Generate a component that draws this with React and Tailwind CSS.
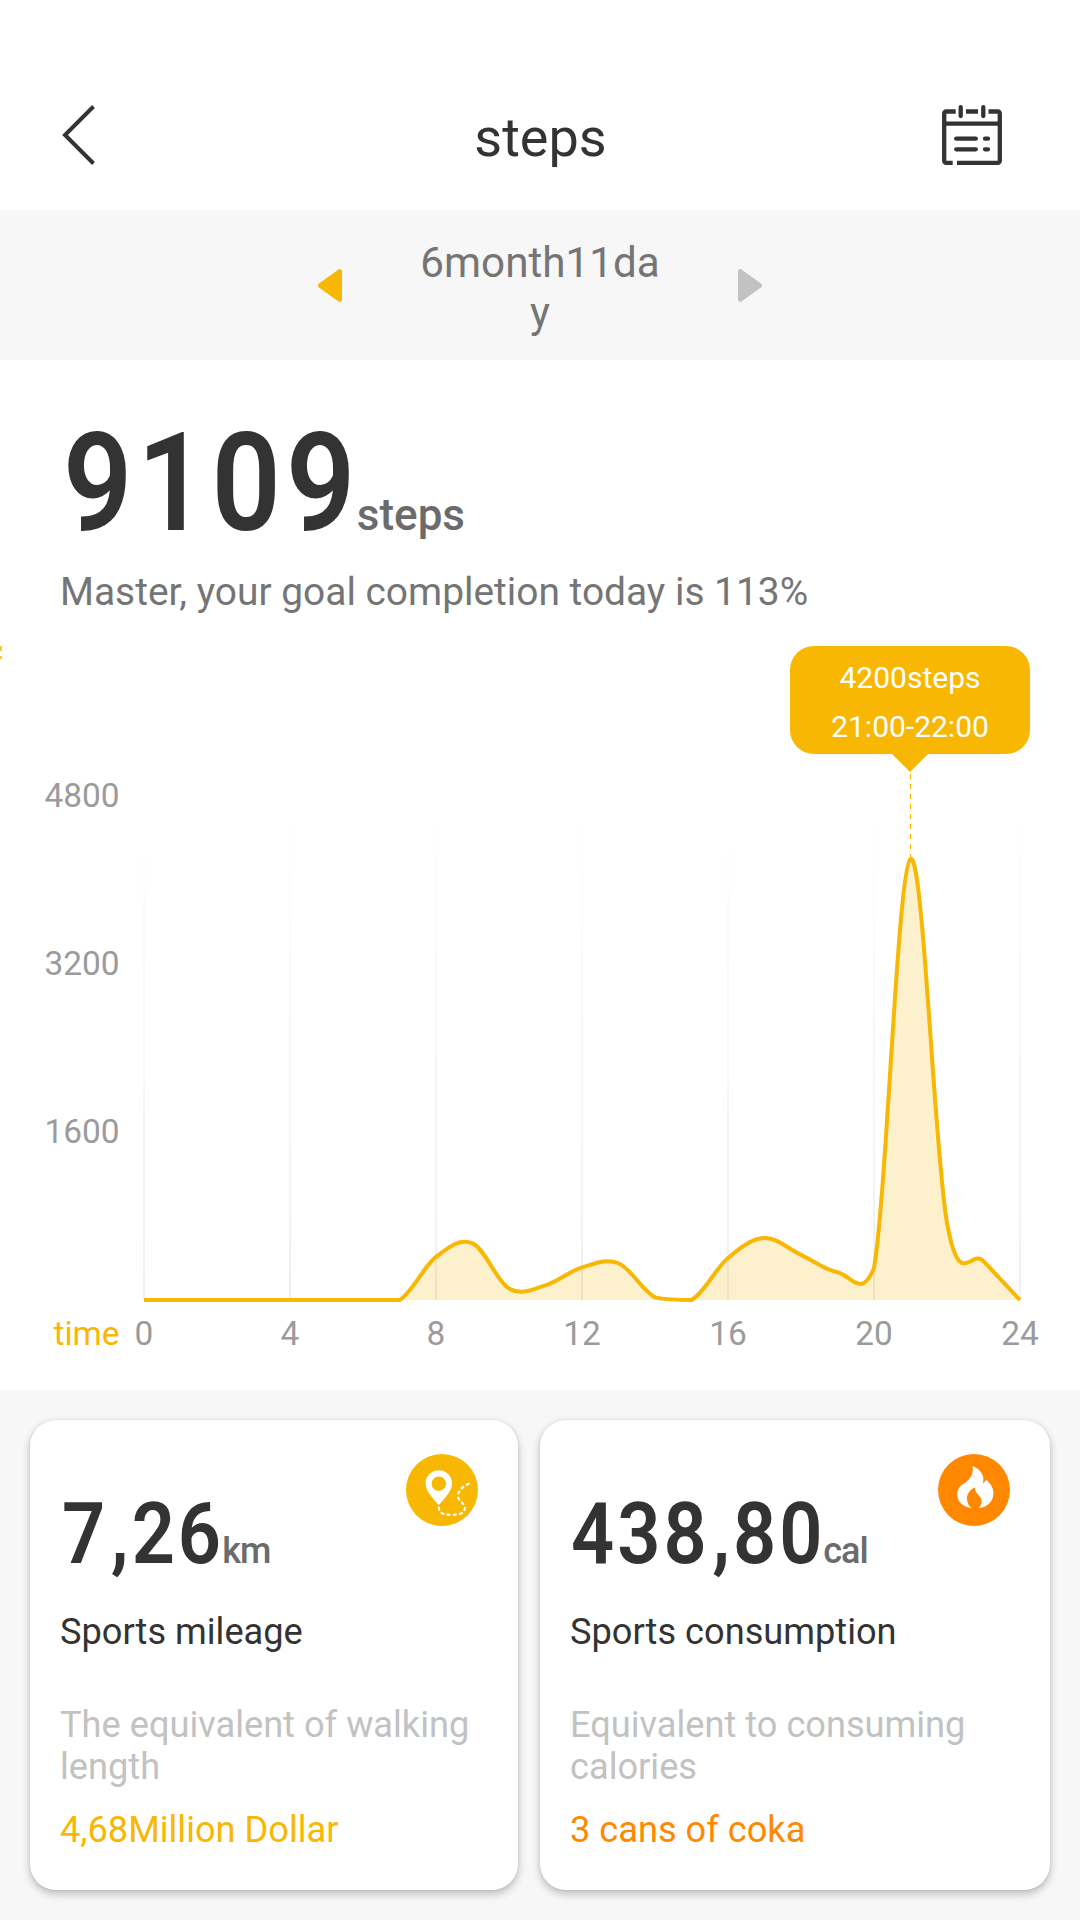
import { useMemo } from 'react'

const STEPS = [
  0, 0, 0, 0, 0, 0, 0, 0, 410, 540, 110, 140, 310, 350, 25, 0, 400, 590, 430,
  265, 305, 4200, 735, 370, 0,
]
const HOURS = [0, 4, 8, 12, 16, 20, 24]
const LEVELS = [4800, 3200, 1600]

const LEFT = 144
const STEP_X = 36.5
const BASE = 684
const PER_STEP = 168 / 1600
const SMOOTH = 0.175

const CARDS = [
  {
    id: 'mileage',
    value: '7,26',
    unit: 'km',
    title: 'Sports mileage',
    hint: 'The equivalent of walking length',
    result: '4,68Million Dollar',
    width: 'w-[488px]',
    trim: '-mr-[24px] ml-[2px]',
    color: 'text-[#f8b702]',
    Icon: RouteIcon,
  },
  {
    id: 'consumption',
    value: '438,80',
    unit: 'cal',
    title: 'Sports consumption',
    hint: 'Equivalent to consuming calories',
    result: '3 cans of coka',
    width: 'w-[510px]',
    trim: '-mr-[37px] ml-[1px]',
    color: 'text-[#ff8800]',
    Icon: FlameIcon,
  },
]

// Control points never go below the axis, so flat stretches stay flat.
function buildLine(values) {
  const pts = values.map((v, i) => [LEFT + i * STEP_X, BASE - v * PER_STEP])
  const at = (i) => pts[Math.min(Math.max(i, 0), pts.length - 1)]
  let d = `M${pts[0][0]} ${pts[0][1]}`
  for (let i = 1; i < pts.length; i++) {
    const [ax, ay] = at(i - 2)
    const [bx, by] = at(i - 1)
    const [cx, cy] = at(i)
    const [ex, ey] = at(i + 1)
    const y1 = Math.min(by + (cy - ay) * SMOOTH, BASE)
    const y2 = Math.min(cy - (ey - by) * SMOOTH, BASE)
    d += ` C${bx + (cx - ax) * SMOOTH} ${y1}`
    d += ` ${cx - (ex - bx) * SMOOTH} ${y2} ${cx} ${cy}`
  }
  return d
}

function BackIcon() {
  return (
    <svg className="h-[60px] w-9" viewBox="0 0 36 60" fill="none">
      <path d="M33.5 1.5 5 30 33.5 58.5" stroke="#333" strokeWidth="4" />
    </svg>
  )
}

function CalendarIcon() {
  return (
    <svg
      className="size-[60px]"
      viewBox="0 0 60 60"
      fill="none"
      stroke="#333"
      strokeWidth="4.3"
    >
      <path d="M13.7 6.5H4.2a2 2 0 0 0-2 2V55.8a2 2 0 0 0 2 2H10.7" />
      <path d="M15 57.8H55.8a2 2 0 0 0 2-2V8.5a2 2 0 0 0-2-2H46.5" />
      <path d="M24 6.5H36M2 18.7H58" />
      <path
        strokeLinecap="round"
        d="M18.7 2.2V11M41.3 2.2V11M14.2 33.7H33.8M43 33.7H46M14.2 44.3H33.8M43 44.3H46"
      />
    </svg>
  )
}

function RouteIcon() {
  return (
    <svg className="size-[72px] shrink-0" viewBox="0 0 72 72" fill="none">
      <circle cx="36" cy="36" r="36" fill="#f8b702" />
      <path
        fill="#fff"
        fillRule="evenodd"
        d="M32.8 16.2c7.4 0 13.2 5.6 13.2 13 0 8-7.6 15.6-13.2 21.9-5.6-6.3-13.2-13.9-13.2-21.9 0-7.4 5.8-13 13.2-13Zm0 6.3a7.2 7.2 0 1 0 0 14.4 7.2 7.2 0 0 0 0-14.4Z"
      />
      <path
        stroke="#fff"
        strokeWidth="2.2"
        strokeLinecap="round"
        strokeDasharray="2.2 4"
        d="M32.8 53.5C33.5 59.5 38 60.8 44 60.8 53 61 59 59.5 58.8 54 58.5 49 52.5 47 52 42.5 52.2 35.5 58 32 64.3 29"
      />
    </svg>
  )
}

function FlameIcon() {
  return (
    <svg className="size-[72px] shrink-0" viewBox="0 0 72 72">
      <circle cx="36" cy="36" r="36" fill="#ff8800" />
      <path
        fill="#fff"
        d="M34.4 12C42 15 47 21 45 29.5L48.5 26C53 30 56 35 55.4 40 55 47 50 53 41 54 43.5 50.5 44 48 43.4 45.5 42 41 36.5 39 36.8 33.3 31 36 28.5 42 29 45 29.3 49.5 31 52 33.7 54 25 53 19.5 48 19.3 40.5 19.3 34 23 31 27.2 28.7 33 24.5 36 19 34.4 12Z"
      />
    </svg>
  )
}

function StepsChart() {
  const line = useMemo(() => buildLine(STEPS), [])

  return (
    <div className="relative h-[774px]">
      <svg
        className="block h-[774px] w-full font-[Roboto,sans-serif] text-[33.4px]"
        viewBox="0 0 1080 774"
        fill="none"
      >
        <defs>
          <linearGradient
            id="grid"
            gradientUnits="userSpaceOnUse"
            x1="0"
            y1="190"
            x2="0"
            y2="684"
          >
            <stop offset="0" stopColor="#000" stopOpacity="0" />
            <stop offset="1" stopColor="#000" stopOpacity="0.06" />
          </linearGradient>
        </defs>

        <path d="M0 30h2v5H0zM0 40h2v3H0z" fill="#fbc537" />

        <path d={line} fill="#fdf0cd" />
        {HOURS.map((h) => (
          <rect
            key={h}
            x={LEFT + h * STEP_X - 1}
            y="190"
            width="2"
            height="494"
            fill="url(#grid)"
          />
        ))}
        <path
          d="M910.5 158V242"
          stroke="#f8b702"
          strokeWidth="1"
          strokeDasharray="5 5"
        />
        <path d={line} stroke="#f8b702" strokeWidth="4" />

        {LEVELS.map((v) => (
          <text
            key={v}
            x="119.5"
            y={BASE - v * PER_STEP + 10.5}
            textAnchor="end"
            fill="#9b9b9b"
          >
            {v}
          </text>
        ))}
        <text x="119.5" y="729" textAnchor="end" fill="#f8b702">
          time
        </text>
        {HOURS.map((h) => (
          <text
            key={h}
            x={LEFT + h * STEP_X}
            y="729"
            textAnchor="middle"
            fill="#9b9b9b"
          >
            {h}
          </text>
        ))}
      </svg>

      <div className="absolute top-[30px] left-[790px] flex w-[240px] flex-col items-center">
        <div className="flex h-[108px] w-full flex-col items-center rounded-[24px] bg-[#f8b702] pt-[7px] text-[30px] leading-[49px] text-white">
          <span>4200steps</span>
          <span>21:00-22:00</span>
        </div>
        <svg className="h-[18px] w-9" viewBox="0 0 36 18">
          <path d="M0 0H36L18 18Z" fill="#f8b702" />
        </svg>
      </div>
    </div>
  )
}

function StatCard({ card }) {
  const { Icon } = card
  const [whole, rest] = card.value.split(',')
  return (
    <div
      className={`h-[470px] rounded-[26px] bg-white pt-[34px] pr-10 pl-[30px] text-[36.2px] leading-[42px] shadow-[0_4px_8px_rgba(0,0,0,0.24),0_0_3px_rgba(0,0,0,0.1)] ${card.width}`}
    >
      <div className="flex items-start justify-between">
        <p className="mt-[37px] text-[86px] leading-[86px] font-medium whitespace-nowrap text-[#333]">
          <span
            className={`inline-block origin-left scale-x-[0.88] font-semibold tracking-[3.4px] ${card.trim}`}
          >
            {whole}
            <span className="ml-[3px]">,</span>
            {rest}
          </span>
          <span className="text-[36px] leading-none tracking-[-1px] text-[#6b6b6b]">
            {card.unit}
          </span>
        </p>
        <Icon />
      </div>
      <p className="mt-[34px] text-[#333]">{card.title}</p>
      <p className="mt-[51px] text-[#c2c2c2]">{card.hint}</p>
      <p className={`mt-[21px] ${card.color}`}>{card.result}</p>
    </div>
  )
}

export default function App() {
  return (
    <main className="flex h-[1920px] w-[1080px] flex-col overflow-hidden bg-white font-[Roboto,sans-serif]">
      <header className="flex h-[210px] items-center justify-between pt-[60px] pr-[78px] pl-[60px]">
        <button type="button" className="w-[60px]">
          <BackIcon />
        </button>
        <h1 className="ml-[19px] pt-[5px] text-[54px] leading-[64px] text-[#333]">
          steps
        </h1>
        <button type="button">
          <CalendarIcon />
        </button>
      </header>

      <div className="flex h-[150px] items-center justify-center gap-[78px] bg-[#f7f7f7]">
        <svg className="h-[33px] w-6" viewBox="0 0 24 33">
          <path
            d="M24 2.5V30.5c0 2.2-2.5 3.2-4.2 1.6L1 18.5c-1.3-1.1-1.3-2.9 0-4L19.8.9C21.5-.7 24 .3 24 2.5Z"
            fill="#f8b702"
          />
        </svg>
        <p className="w-[240px] pt-[6px] text-center text-[42.2px] leading-[50px] break-all text-[#757575]">
          6month11day
        </p>
        <svg className="h-[33px] w-6" viewBox="0 0 24 33">
          <path
            d="M0 2.5V30.5c0 2.2 2.5 3.2 4.2 1.6L23 18.5c1.3-1.1 1.3-2.9 0-4L4.2.9C2.5-.7 0 .3 0 2.5Z"
            fill="#c2c2c2"
          />
        </svg>
      </div>

      <section className="pt-[53px]">
        <p className="pl-[63px] text-[138px] leading-[140px] font-medium whitespace-nowrap text-[#333]">
          <span className="-mr-[44px] inline-block origin-left scale-x-[0.88] font-semibold tracking-[5.6px]">
            9109
          </span>
          <span className="text-[44px] leading-none text-[#6b6b6b]">
            steps
          </span>
        </p>
        <p className="mt-[15px] pl-[60px] text-[38.9px] leading-[48px] text-[#757575]">
          Master, your goal completion today is 113%
        </p>
        <StepsChart />
      </section>

      <section className="flex flex-1 gap-[22px] bg-[#f7f7f7] px-[30px] pt-[30px]">
        {CARDS.map((card) => (
          <StatCard key={card.id} card={card} />
        ))}
      </section>
    </main>
  )
}
